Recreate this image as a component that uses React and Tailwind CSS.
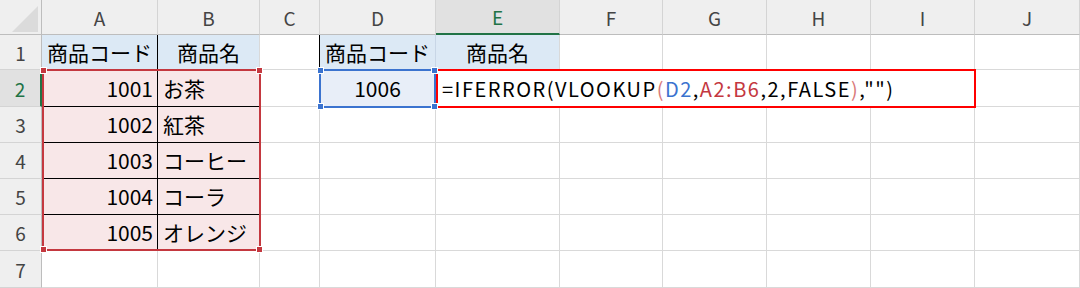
const cols = [
  { id: 'A', w: 116 },
  { id: 'B', w: 102 },
  { id: 'C', w: 60 },
  { id: 'D', w: 116 },
  { id: 'E', w: 124 },
  { id: 'F', w: 103 },
  { id: 'G', w: 104 },
  { id: 'H', w: 104 },
  { id: 'I', w: 104 },
  { id: 'J', w: 105 },
]

const colStart = ['col-start-1', 'col-start-2', 'col-start-3', 'col-start-4', 'col-start-5', 'col-start-6', 'col-start-7', 'col-start-8', 'col-start-9', 'col-start-10', 'col-start-11']
const rowStart = ['row-start-1', 'row-start-2', 'row-start-3', 'row-start-4', 'row-start-5', 'row-start-6', 'row-start-7', 'row-start-8']

const blue = 'bg-[#dce9f5]'
const pink = 'bg-[#f8e7e8]'

const data = {
  A1: { v: '商品コード', align: 'center', bg: blue },
  B1: { v: '商品名', align: 'center', bg: blue },
  D1: { v: '商品コード', align: 'center', bg: blue },
  E1: { v: '商品名', align: 'center', bg: blue },
  A2: { v: '1001', align: 'right', bg: pink },
  B2: { v: 'お茶', align: 'left', bg: pink },
  A3: { v: '1002', align: 'right', bg: pink },
  B3: { v: '紅茶', align: 'left', bg: pink },
  A4: { v: '1003', align: 'right', bg: pink },
  B4: { v: 'コーヒー', align: 'left', bg: pink },
  A5: { v: '1004', align: 'right', bg: pink },
  B5: { v: 'コーラ', align: 'left', bg: pink },
  A6: { v: '1005', align: 'right', bg: pink },
  B6: { v: 'オレンジ', align: 'left', bg: pink },
  D2: { v: '1006', align: 'center', bg: 'bg-[#e8eef8]' },
}

const alignCls = {
  left: 'justify-start pl-[5px]',
  right: 'justify-end pr-[4px]',
  center: 'justify-center',
}

function Cell({ col, row }) {
  const id = cols[col].id + row
  const c = data[id]
  const letter = cols[col].id
  const rightBlack = (letter === 'A' && row <= 6) || id === 'C1'
  const bottomBlack = (letter === 'A' || letter === 'B') && row >= 2 && row <= 5
  return (
    <div
      className={`${colStart[col + 1]} ${rowStart[row]} flex items-center border-r border-b ${rightBlack ? 'border-r-black' : id === 'D1' ? 'border-r-[#c8d6e6]' : 'border-r-[#d9d9d9]'} ${bottomBlack ? 'border-b-black' : 'border-b-[#d9d9d9]'} ${c ? c.bg : 'bg-white'} ${c ? alignCls[c.align] : ''}`}
    >
      {c && <span className="text-[21px] text-black leading-none whitespace-nowrap">{c.v}</span>}
    </div>
  )
}

function Handles({ color }) {
  return (
    <>
      <span className={`absolute -left-[4px] -top-[4px] w-[7px] h-[7px] border border-white ${color}`} />
      <span className={`absolute -right-[4px] -top-[4px] w-[7px] h-[7px] border border-white ${color}`} />
      <span className={`absolute -left-[4px] -bottom-[4px] w-[7px] h-[7px] border border-white ${color}`} />
      <span className={`absolute -right-[4px] -bottom-[4px] w-[7px] h-[7px] border border-white ${color}`} />
    </>
  )
}

export default function App() {
  return (
    <div
      className="w-[1080px] h-[288px] bg-white overflow-hidden"
      style={{ fontFamily: '"Noto Sans CJK JP", "Noto Sans", sans-serif' }}
    >
      <div className="grid grid-cols-[42px_116px_102px_60px_116px_124px_103px_104px_104px_104px_105px] grid-rows-[35px_35px_37px_36px_36px_36px_36px_37px]">
        {/* corner */}
        <div className="col-start-1 row-start-1 relative bg-[#efefef] border-r border-b border-[#bdbdbd]">
          <svg width="42" height="35" className="absolute left-0 top-0">
            <polygon points="12,32 38,32 38,6" fill="#dbdbdb" />
          </svg>
        </div>

        {/* column headers */}
        {cols.map((c, i) => (
          <div
            key={c.id}
            className={`${colStart[i + 1]} row-start-1 flex items-center justify-center text-[19px] leading-none border-r border-r-[#d4d4d4] ${c.id === 'E' ? 'bg-[#e1e1e1] text-[#217346] border-b-2 border-b-[#217346]' : 'bg-[#efefef] text-[#444] border-b border-b-[#bdbdbd]'}`}
          >
            {c.id}
          </div>
        ))}

        {/* row headers */}
        {[1, 2, 3, 4, 5, 6, 7].map(r => (
          <div
            key={r}
            className={`col-start-1 ${rowStart[r]} flex items-center justify-center text-[19px] leading-none border-b border-b-[#d4d4d4] ${r === 2 ? 'bg-[#e1e1e1] text-[#217346] border-r-2 border-r-[#217346]' : 'bg-[#efefef] text-[#444] border-r border-r-[#bdbdbd]'}`}
          >
            {r}
          </div>
        ))}

        {/* cells */}
        {[1, 2, 3, 4, 5, 6, 7].map(r =>
          cols.map((c, i) => <Cell key={c.id + r} col={i} row={r} />)
        )}

        {/* A2:B6 reference range */}
        <div className="col-start-2 col-span-2 row-start-3 row-span-5 relative z-10 border-2 border-[#c4383f] -mr-[1px] -mt-[1px]">
          <Handles color="bg-[#c4383f]" />
        </div>

        {/* E2 cell being edited */}
        <div className="col-start-6 col-span-5 row-start-3 relative z-10 -mt-[1px] -mr-[1px] h-[39px] border-2 border-[#ff0000] bg-white flex items-center pl-[4px]">
          <span className="text-[20px] leading-none text-black whitespace-nowrap tracking-[1.5px]">
            =IFERROR(VLOOKUP<span className="text-[#d97a7a]">(</span>
            <span className="text-[#3b73cf]">D2</span>,
            <span className="text-[#c4383f]">A2:B6</span>,2,FALSE<span className="text-[#d97a7a]">)</span>,"")
          </span>
        </div>

        {/* D2 reference */}
        <div className="col-start-5 row-start-3 relative z-20 -ml-[1px] -mt-[1px] h-[39px] border-2 border-[#3b73cf]">
          <Handles color="bg-[#3b73cf]" />
        </div>
      </div>
    </div>
  )
}
